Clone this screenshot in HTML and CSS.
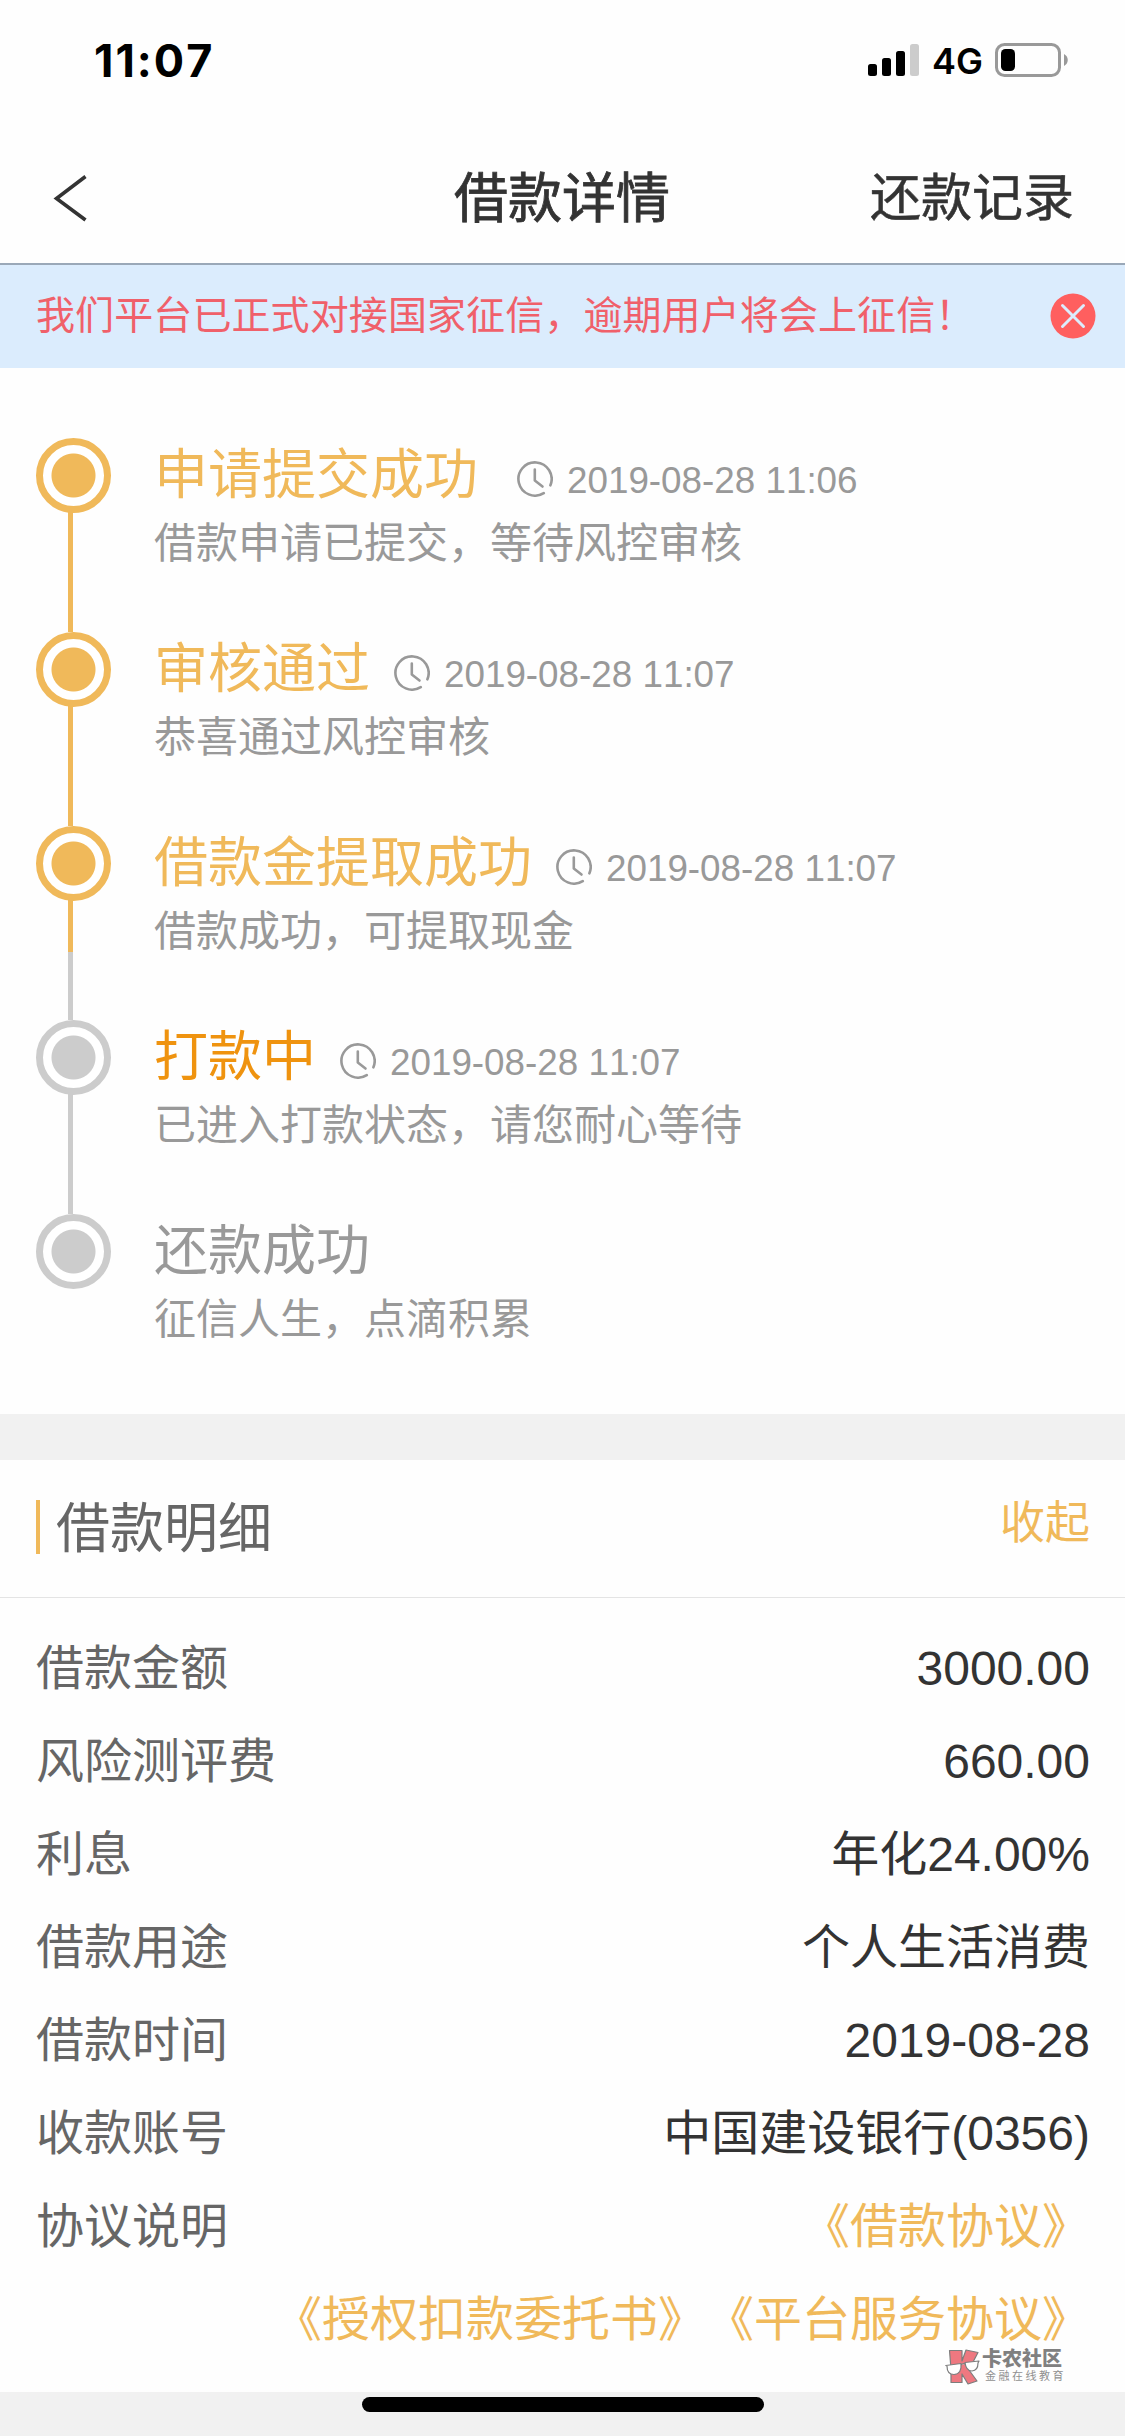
FILE: index.html
```html
<!DOCTYPE html>
<html lang="zh-CN">
<head>
<meta charset="utf-8">
<title>借款详情</title>
<link rel="stylesheet" href="styles.css">
</head>
<body>
<svg class="defs" width="0" height="0">
  <symbol id="clock" viewBox="0 0 36 36">
    <path d="M33.400 24.300A16.600 16.600 0 1 0 26.800 32.100" fill="none" stroke="currentColor" stroke-width="2.600" stroke-linecap="round"/>
    <path d="M17.800 8.500V19.500L25.500 25.500" fill="none" stroke="currentColor" stroke-width="2.600" stroke-linecap="round" stroke-linejoin="round"/>
  </symbol>
</svg>
<div class="screen">
  <div class="status">
    <span class="status-time">11:07</span>
    <div class="status-right">
      <svg class="signal" width="52" height="34" viewBox="0 0 52 34">
        <rect x="0" y="21" width="9" height="12" rx="2.5"/>
        <rect x="14" y="15" width="9" height="18" rx="2.5"/>
        <rect x="28" y="8" width="9" height="25" rx="2.5"/>
        <rect x="42" y="1" width="9" height="32" rx="2.5" fill="#ccc"/>
      </svg>
      <span class="net">4G</span>
      <svg class="battery" width="74" height="34" viewBox="0 0 74 34">
        <rect x="1.5" y="1.5" width="63" height="31" rx="8" fill="none" stroke="#999" stroke-width="3"/>
        <rect x="6" y="6" width="14" height="22" rx="4.5"/>
        <path d="M69 11C74 13.500 74 20.500 69 23Z" fill="#999"/>
      </svg>
    </div>
  </div>
  <header class="nav">
    <svg class="back" width="36" height="48" viewBox="0 0 36 48"><path d="M32.500 2.500L3.500 24.500L32.500 46" fill="none" stroke="#333" stroke-width="3.6"/></svg>
    <h1 class="nav-title">借款详情</h1>
    <a class="nav-link">还款记录</a>
  </header>
  <div class="notice">
    <span class="notice-text">我们平台已正式对接国家征信，逾期用户将会上征信！</span>
    <svg class="close" width="46" height="46" viewBox="0 0 46 46"><circle cx="23" cy="23" r="22.500" fill="#ff5f5f"/><path d="M12.500 12.500L33.500 33.500M33.500 12.500L12.500 33.500" stroke="#dbecfd" stroke-width="3" stroke-linecap="round"/></svg>
  </div>
  <ol class="steps">
    <li class="step done">
      <div class="rail"><i class="dot"></i></div>
      <div class="step-body">
        <div class="step-head"><span class="step-title wide">申请提交成功</span><svg class="clock"><use href="#clock"/></svg><time class="when">2019-08-28 11:06</time></div>
        <p class="step-desc">借款申请已提交，等待风控审核</p>
      </div>
    </li>
    <li class="step done">
      <div class="rail"><i class="dot"></i></div>
      <div class="step-body">
        <div class="step-head"><span class="step-title">审核通过</span><svg class="clock"><use href="#clock"/></svg><time class="when">2019-08-28 11:07</time></div>
        <p class="step-desc">恭喜通过风控审核</p>
      </div>
    </li>
    <li class="step done last-done">
      <div class="rail"><i class="dot"></i></div>
      <div class="step-body">
        <div class="step-head"><span class="step-title">借款金提取成功</span><svg class="clock"><use href="#clock"/></svg><time class="when">2019-08-28 11:07</time></div>
        <p class="step-desc">借款成功，可提取现金</p>
      </div>
    </li>
    <li class="step current">
      <div class="rail"><i class="dot"></i></div>
      <div class="step-body">
        <div class="step-head"><span class="step-title">打款中</span><svg class="clock"><use href="#clock"/></svg><time class="when">2019-08-28 11:07</time></div>
        <p class="step-desc">已进入打款状态，请您耐心等待</p>
      </div>
    </li>
    <li class="step final">
      <div class="rail"><i class="dot"></i></div>
      <div class="step-body">
        <div class="step-head"><span class="step-title">还款成功</span></div>
        <p class="step-desc">征信人生，点滴积累</p>
      </div>
    </li>
  </ol>
  <section class="detail">
    <div class="detail-head">
      <h2 class="detail-title">借款明细</h2>
      <a class="toggle">收起</a>
    </div>
    <dl class="rows">
      <div class="row"><dt>借款金额</dt><dd>3000.00</dd></div>
      <div class="row"><dt>风险测评费</dt><dd>660.00</dd></div>
      <div class="row"><dt>利息</dt><dd>年化24.00%</dd></div>
      <div class="row"><dt>借款用途</dt><dd>个人生活消费</dd></div>
      <div class="row"><dt>借款时间</dt><dd>2019-08-28</dd></div>
      <div class="row"><dt>收款账号</dt><dd>中国建设银行(0356)</dd></div>
      <div class="row"><dt>协议说明</dt><dd class="links"><a>《借款协议》</a><br><a>《授权扣款委托书》</a><a>《平台服务协议》</a></dd></div>
    </dl>
  </section>
  <div class="watermark">
    <svg class="mark" width="35" height="36" viewBox="0 0 35 36">
      <path d="M4.500 1.500H17V12L21 1L33 3.500L27 15L24 21L32 32L23 35L17 25V33.500H6V20Z" fill="#ee7880" stroke="#7d7d7d" stroke-width="1.200" stroke-linejoin="round"/>
      <path d="M0.800 16.500L16 14.500Q17 25 9 25.500Q2 25.500 2 17ZM20 13.500L34 12L33 14Q33 21.500 27 22Q21 22 20 13.500ZM16 16Q18 14 20 15" fill="#fff" stroke="#7d7d7d" stroke-width="1.200" stroke-linejoin="round"/>
    </svg>
    <div class="mark-text"><b class="mark-name">卡农社区</b><span class="mark-sub">金融在线教育</span></div>
  </div>
  <footer class="home"><div class="home-bar"></div></footer>
</div>
</body>
</html>
```
FILE: styles.css
```css
* { box-sizing: border-box; margin: 0; padding: 0; }
body {
  background: #fff;
  font-family: "Liberation Sans", "Noto Sans CJK SC", sans-serif;
  font-weight: 400;
  color: #333;
  text-spacing-trim: space-all;
  font-kerning: none;
}
.defs { position: absolute; }
.screen { position: relative; display: flex; flex-direction: column; width: 1125px; height: 2436px; overflow: hidden; background: #fefefe; }

.status { display: flex; justify-content: space-between; height: 132px; padding: 43px 57px 0 94px; color: #000; font-family: Inter, sans-serif; }
.status-time { font-size: 45px; line-height: 35px; font-weight: 700; letter-spacing: 2px; }
.status-right { display: flex; height: 34px; }
.net { width: 75px; padding-left: 12px; font-size: 36px; line-height: 37px; font-weight: 600; }
.battery { margin-right: -1px; }

.nav { display: grid; grid-template-columns: 300px 1fr 300px; align-items: center; height: 133px; padding: 0 51px 0 50px; border-bottom: 2px solid #9aa8b8; }
.back { margin-left: 3px; }
.nav-title { padding-top: 3px; font-size: 54px; line-height: 80px; font-weight: 400; text-align: center; -webkit-text-stroke: 0.800px #333; }
.nav-link { padding-top: 3px; font-size: 51px; line-height: 76px; text-align: right; -webkit-text-stroke: 0.500px #333; }

.notice { display: flex; align-items: center; justify-content: space-between; height: 103px; padding: 0 29px 2px 36px; background: #dbecfd; }
.notice-text { padding-top: 1px; font-size: 39px; line-height: 60px; letter-spacing: 0.100px; color: #f0606a; white-space: nowrap; }

.steps { height: 1046px; padding: 70px 0 0 36px; list-style: none; }
.step { display: flex; height: 194px; }
.rail { width: 118px; background: linear-gradient(#ccc, #ccc) 32px 74px / 5px 121px no-repeat; }
.done .rail { background-image: linear-gradient(#f0b95a, #f0b95a); }
.last-done .rail { background-image: linear-gradient(#f0b95a 52px, #ccc 52px); }
.final .rail { background: none; }
.dot { display: block; width: 75px; height: 75px; border: 7px solid #ccc; border-radius: 50%; background: radial-gradient(circle, #ccc 21.500px, #fff 22.500px); }
.done .dot { border-color: #f0b95a; background: radial-gradient(circle, #f0b95a 21.500px, #fff 22.500px); }
.step-head { display: flex; height: 74px; }
.step-title { margin-right: 24px; font-size: 54px; line-height: 74px; font-weight: 400; color: #999; }
.step-title.wide { margin-right: 39px; }
.done .step-title { color: #f0b95a; }
.current .step-title { color: #ef930f; }
.clock { width: 36px; height: 36px; margin-top: 23px; color: #999; }
.when { margin-left: 14px; font-size: 36.800px; line-height: 86px; color: #999; white-space: nowrap; }
.step-desc { font-size: 42px; line-height: 64px; font-weight: 400; color: #999; }

.detail { height: 978px; border-top: 46px solid #f1f1f1; }
.detail-head { display: flex; justify-content: space-between; height: 138px; padding: 40px 35px 0 36px; border-bottom: 1px solid #e4e4e4; }
.detail-title { height: 54px; padding-left: 16px; border-left: 4px solid #f0b95a; font-size: 54px; line-height: 59px; font-weight: 400; color: #666; }
.toggle { font-size: 45px; line-height: 48px; color: #f0b95a; }
.rows { padding: 24px 35px 0 36px; font-size: 48px; line-height: 93px; }
.row { display: flex; justify-content: space-between; }
.row dt { color: #666; }
.row dd { text-align: right; }
.row .links { color: #f0b95a; }

.watermark { position: absolute; left: 945px; top: 2349px; display: flex; gap: 2px; }
.mark-text { display: flex; flex-direction: column; color: #808080; white-space: nowrap; }
.mark-name { font-size: 20px; line-height: 21px; font-weight: 900; }
.mark-sub { padding-left: 3px; font-size: 11px; line-height: 13px; letter-spacing: 2.500px; color: #909090; }

.home { height: 44px; padding-top: 5px; background: #f1f1f1; }
.home-bar { width: 402px; height: 15px; margin: 0 auto; border-radius: 8px; background: #000; }
```
